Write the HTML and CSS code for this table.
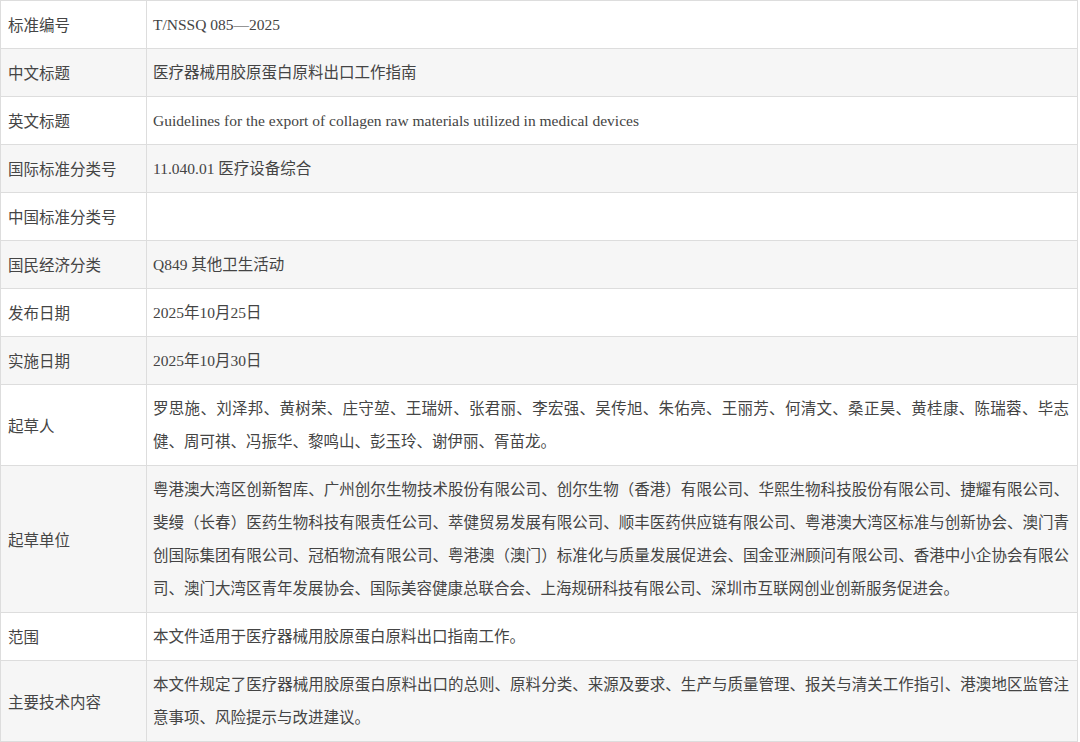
FILE: index.html
```html
<!DOCTYPE html>
<html lang="zh-CN">
<head>
<meta charset="utf-8">
<title>T/NSSQ 085—2025</title>
<link rel="stylesheet" href="styles.css">
</head>
<body>
<table class="std">
  <tbody>
    <tr><th>标准编号</th><td>T/NSSQ 085—2025</td></tr>
    <tr><th>中文标题</th><td>医疗器械用胶原蛋白原料出口工作指南</td></tr>
    <tr><th>英文标题</th><td>Guidelines for the export of collagen raw materials utilized in medical devices</td></tr>
    <tr><th>国际标准分类号</th><td>11.040.01 医疗设备综合</td></tr>
    <tr><th>中国标准分类号</th><td></td></tr>
    <tr><th>国民经济分类</th><td>Q849 其他卫生活动</td></tr>
    <tr><th>发布日期</th><td>2025年10月25日</td></tr>
    <tr><th>实施日期</th><td>2025年10月30日</td></tr>
    <tr><th>起草人</th><td><span class="ln">罗思施、刘泽邦、黄树荣、庄守堃、王瑞妍、张君丽、李宏强、吴传旭、朱佑亮、王丽芳、何清文、桑正昊、黄桂康、陈瑞蓉、毕志</span><span class="ln last">健、周可祺、冯振华、黎鸣山、彭玉玲、谢伊丽、胥苗龙。</span></td></tr>
    <tr><th>起草单位</th><td><span class="ln">粤港澳大湾区创新智库、广州创尔生物技术股份有限公司、创尔生物（香港）有限公司、华熙生物科技股份有限公司、捷耀有限公司、</span><span class="ln">斐缦（长春）医药生物科技有限责任公司、萃健贸易发展有限公司、顺丰医药供应链有限公司、粤港澳大湾区标准与创新协会、澳门青</span><span class="ln">创国际集团有限公司、冠栢物流有限公司、粤港澳（澳门）标准化与质量发展促进会、国金亚洲顾问有限公司、香港中小企协会有限公</span><span class="ln last">司、澳门大湾区青年发展协会、国际美容健康总联合会、上海规研科技有限公司、深圳市互联网创业创新服务促进会。</span></td></tr>
    <tr><th>范围</th><td>本文件适用于医疗器械用胶原蛋白原料出口指南工作。</td></tr>
    <tr><th>主要技术内容</th><td><span class="ln">本文件规定了医疗器械用胶原蛋白原料出口的总则、原料分类、来源及要求、生产与质量管理、报关与清关工作指引、港澳地区监管注</span><span class="ln last">意事项、风险提示与改进建议。</span></td></tr>
  </tbody>
</table>
</body>
</html>
```

FILE: styles.css
```css
html, body {
  margin: 0;
  padding: 0;
  background: #ffffff;
}

.std {
  width: 1078px;
  border-collapse: collapse;
  font-family: "Liberation Serif", "Noto Sans CJK SC", serif;
  font-size: 15.5px;
  line-height: 33px;
  color: #444444;
}

.std th,
.std td {
  border: 1px solid #dddddd;
  padding: 7px 7px 7px 7px;
  text-align: left;
  font-weight: normal;
  vertical-align: middle;
}

.std th {
  width: 131px;
  font-family: "Noto Sans CJK SC", sans-serif;
  color: #454545;
}

.std td {
  padding-left: 6px;
  padding-right: 8px;
}

.std tr:nth-child(even) th,
.std tr:nth-child(even) td {
  background: #f6f6f6;
}

.ln {
  display: block;
  white-space: nowrap;
  text-align: justify;
  text-align-last: justify;
}

.ln.last {
  text-align-last: left;
}
```
